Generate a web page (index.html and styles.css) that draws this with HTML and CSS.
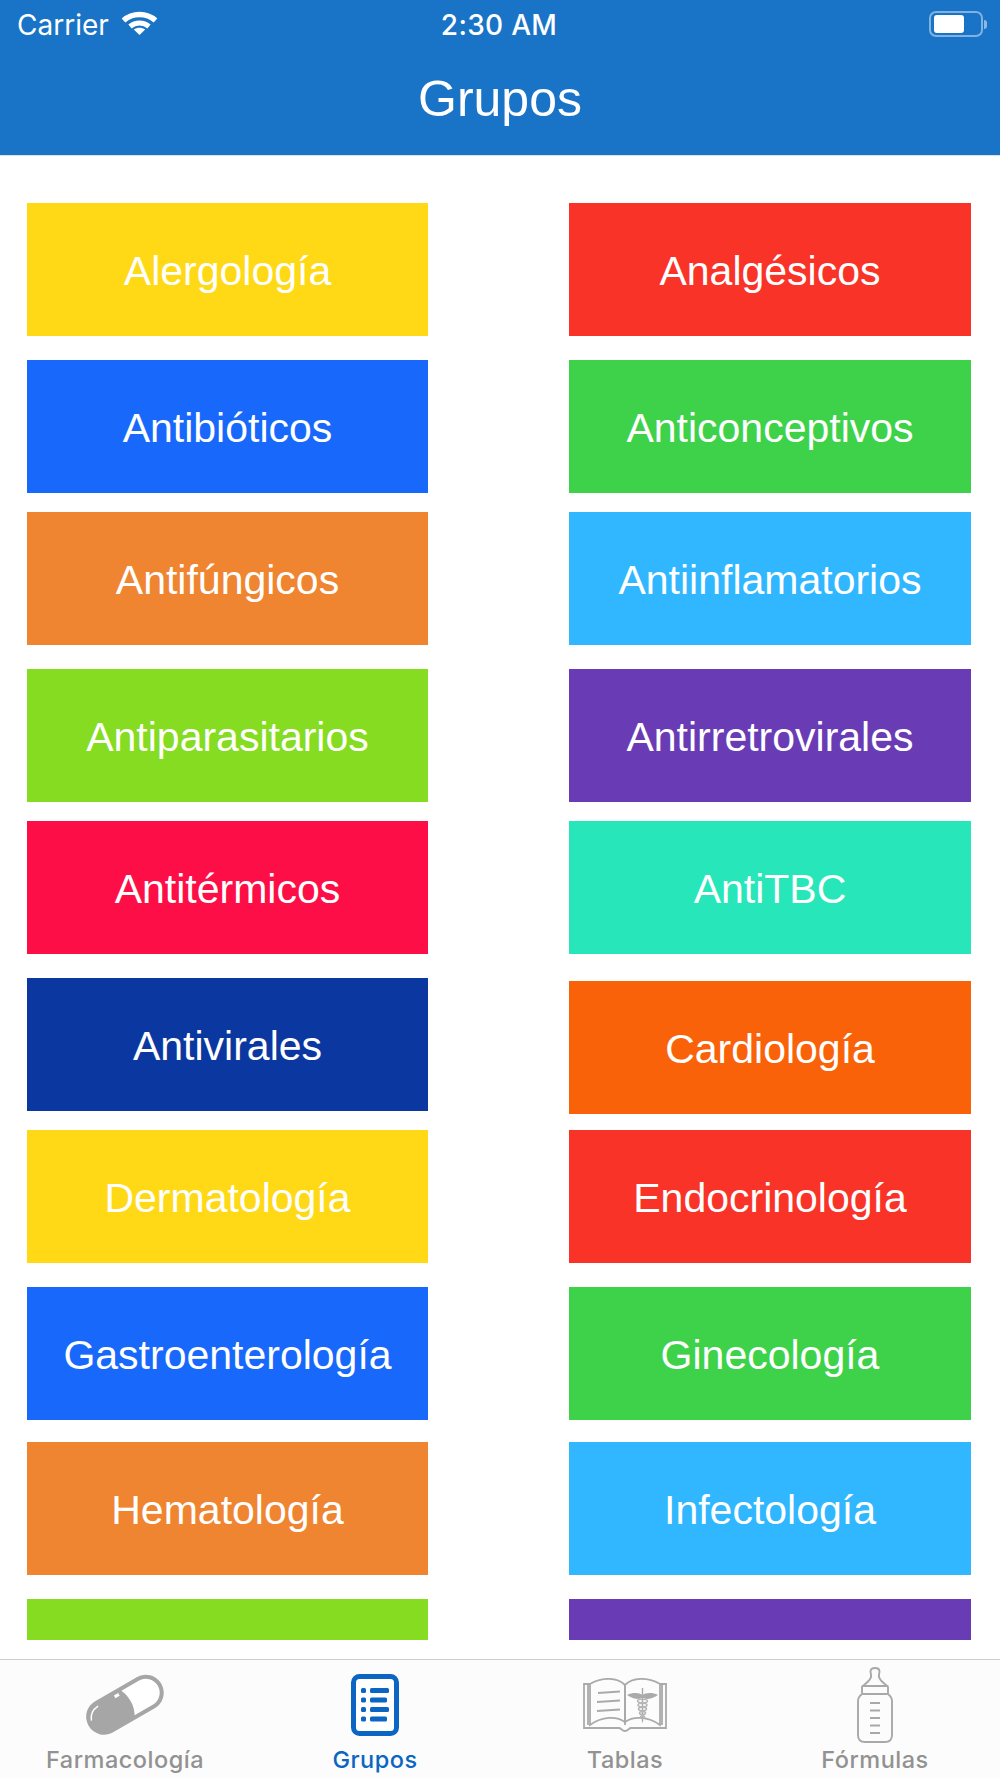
FILE: index.html
```html
<!DOCTYPE html>
<html lang="es">
<head>
    <meta charset="UTF-8">
    <title>Grupos</title>
    <link rel="stylesheet" href="styles.css">
</head>
<body>
    <header class="top-bar">
        <div class="status-bar">
            <div class="status-left">
                <span class="status-text">Carrier</span>
                <svg class="wifi" viewBox="0 0 37 24" width="37" height="24">
                    <path d="M2.500 9.500C11.500 1.500 25.500 1.500 34.500 9.500" fill="none" stroke="#fff" stroke-width="5.500"/>
                    <path d="M9 15.500C14.500 10.800 22.500 10.800 28 15.500" fill="none" stroke="#fff" stroke-width="5"/>
                    <path d="M18.500 24L12.800 18.500C16 16.300 21 16.300 24.200 18.500Z" fill="#fff"/>
                </svg>
            </div>
            <div class="status-time status-text">2:30 AM</div>
            <div class="status-right">
                <div class="battery"><div class="battery-fill"></div></div>
                <div class="battery-tip"></div>
            </div>
        </div>
        <h1 class="title">Grupos</h1>
    </header>

    <main class="groups">
        <div class="column">
            <div class="tile yellow">Alergología</div>
            <div class="tile blue gap-l">Antibióticos</div>
            <div class="tile orange gap-s">Antifúngicos</div>
            <div class="tile lime gap-l">Antiparasitarios</div>
            <div class="tile pink gap-s">Antitérmicos</div>
            <div class="tile navy gap-l">Antivirales</div>
            <div class="tile yellow gap-s">Dermatología</div>
            <div class="tile blue gap-l">Gastroenterología</div>
            <div class="tile orange gap-m">Hematología</div>
            <div class="tile lime gap-l"></div>
        </div>
        <div class="column">
            <div class="tile red">Analgésicos</div>
            <div class="tile green gap-l">Anticonceptivos</div>
            <div class="tile sky gap-s">Antiinflamatorios</div>
            <div class="tile purple gap-l">Antirretrovirales</div>
            <div class="tile teal gap-s">AntiTBC</div>
            <div class="tile deep-orange gap-xl">Cardiología</div>
            <div class="tile red gap-xs">Endocrinología</div>
            <div class="tile green gap-l">Ginecología</div>
            <div class="tile sky gap-m">Infectología</div>
            <div class="tile purple gap-l"></div>
        </div>
    </main>

    <nav class="tab-bar">
        <div class="tab">
            <div class="tab-icon">
                <svg viewBox="0 0 80 62" width="80" height="62">
                    <g transform="rotate(-30 39.500 31)">
                        <rect x="-2" y="13" width="84" height="36" rx="18" fill="#a6a6a6"/>
                        <path d="M44 17H64A14 14 0 0 1 64 45H43C48 37 48 26 44 17Z" fill="#fff"/>
                        <path d="M3 28C5 22.500 10 19.200 16 18.800" fill="none" stroke="#fff" stroke-width="1.500"/>
                        <rect x="35" y="17.500" width="5" height="3" fill="#fff"/>
                    </g>
                </svg>
            </div>
            <div class="tab-label">Farmacología</div>
        </div>
        <div class="tab active">
            <div class="tab-icon">
                <svg viewBox="0 0 48 62" width="48" height="62">
                    <rect x="2.500" y="2.500" width="43" height="57" rx="6" fill="#fff" stroke="#0a66c2" stroke-width="5"/>
                    <g fill="#0a66c2">
                        <rect x="10" y="14" width="5" height="5" rx="1.500"/>
                        <rect x="19" y="14" width="19" height="5" rx="1.500"/>
                        <rect x="10" y="23.500" width="5" height="5" rx="1.500"/>
                        <rect x="19" y="23.500" width="17" height="5" rx="1.500"/>
                        <rect x="10" y="33" width="5" height="5" rx="1.500"/>
                        <rect x="19" y="33" width="19" height="5" rx="1.500"/>
                        <rect x="10" y="42.500" width="5" height="5" rx="1.500"/>
                        <rect x="19" y="42.500" width="17" height="5" rx="1.500"/>
                    </g>
                </svg>
            </div>
            <div class="tab-label">Grupos</div>
        </div>
        <div class="tab">
            <div class="tab-icon">
                <svg viewBox="0 0 84 54" width="84" height="54">
                    <g fill="none" stroke="#aaa" stroke-width="1.800">
                        <path d="M7 6H1V50H36C38 50 39 53 42 53S46 50 48 50H83V6H77"/>
                        <path d="M5 6V47"/>
                        <path d="M79 6V47"/>
                        <path d="M42 44C34 38 19 38 7 47V6C19 -1 34 -1 42 7Z"/>
                        <path d="M42 44C50 38 65 38 77 47V6C65 -1 50 -1 42 7Z"/>
                        <path d="M42 7V47"/>
                        <path d="M15 15L37 13.500M14 24L37 22.500M14 33L37 31.500"/>
                    </g>
                    <g fill="#aaa">
                        <path d="M44 17C50 14 57 15 59.500 17C62 15 69 14 75 17C69 21 63 22 60.500 20H58.500C56 22 50 21 44 17Z"/>
                        <path d="M58.800 10H60.200V43L59.500 45L58.800 43Z"/>
                    </g>
                    <g fill="none" stroke="#b5b5b5" stroke-width="1.500">
                        <ellipse cx="59.500" cy="23" rx="5" ry="1.800"/>
                        <ellipse cx="59.500" cy="27" rx="4.500" ry="1.800"/>
                        <ellipse cx="59.500" cy="31" rx="4" ry="1.700"/>
                        <ellipse cx="59.500" cy="35" rx="3" ry="1.500"/>
                        <ellipse cx="59.500" cy="39" rx="2" ry="1.300"/>
                    </g>
                </svg>
            </div>
            <div class="tab-label">Tablas</div>
        </div>
        <div class="tab">
            <div class="tab-icon">
                <svg viewBox="0 0 36 76" width="36" height="76">
                    <g fill="none" stroke="#a8a8a8" stroke-width="1.900">
                        <path d="M6 19C9 16 13 14 14 10C14.500 8 13.500 6 13.500 4.500C13.500 2 15.500 1 18 1S22.500 2 22.500 4.500C22.500 6 21.500 8 22 10C23 14 27 16 30 19"/>
                        <rect x="5" y="19" width="26" height="8" rx="1"/>
                        <path d="M5 27C2.500 29 1 31 1 34V68C1 72.500 3.500 75 8 75H28C32.500 75 35 72.500 35 68V34C35 31 33.500 29 31 27"/>
                        <path d="M13 36H23M13 43.500H23M13 51H23M13 58.500H23M13 66H23"/>
                    </g>
                </svg>
            </div>
            <div class="tab-label">Fórmulas</div>
        </div>
    </nav>
</body>
</html>
```

FILE: styles.css
```css
body {
    margin: 0;
    height: 1778px;
    overflow: hidden;
    display: flex;
    flex-direction: column;
    background-color: #ffffff;
    font-family: "Liberation Sans", Arial, sans-serif;
}

/* Top bar */
.top-bar {
    height: 155px;
    flex: none;
    background-color: #1973c6;
    border-bottom: 1px solid #dbe3ea;
    color: #ffffff;
}
.status-bar {
    height: 48px;
    display: grid;
    grid-template-columns: 1fr auto 1fr;
    align-items: center;
    padding: 0 13px 0 17px;
    font-family: Inter, "Liberation Sans", sans-serif;
    font-size: 28px;
}
.status-text {
    padding-top: 2px;
}
.status-left {
    display: flex;
    align-items: center;
    gap: 12px;
}
.wifi {
    margin-bottom: 2px;
}
.status-time {
    margin-right: 6px;
    font-weight: 500;
    letter-spacing: 0.3px;
}
.status-right {
    display: flex;
    align-items: center;
    justify-content: flex-end;
    gap: 1px;
}
.battery {
    box-sizing: border-box;
    width: 54px;
    height: 26px;
    padding: 2px 3px;
    border: 2px solid rgba(255, 255, 255, 0.45);
    border-radius: 7px;
}
.battery-fill {
    width: 30px;
    height: 18px;
    background-color: #ffffff;
    border-radius: 3px;
}
.battery-tip {
    width: 3px;
    height: 9px;
    background-color: rgba(255, 255, 255, 0.5);
    border-radius: 0 4px 4px 0;
}
.title {
    margin: 0;
    padding-top: 22px;
    text-align: center;
    font-size: 50px;
    font-weight: normal;
    line-height: 58px;
}

/* Tiles */
.groups {
    flex: 1;
    min-height: 0;
    overflow: hidden;
    margin-bottom: 19px;
    padding: 47px 29px 0 27px;
    display: flex;
    justify-content: space-between;
    align-items: flex-start;
}
.column {
    width: 402px;
    flex: none;
}
.column:first-child {
    width: 401px;
}
.tile {
    box-sizing: border-box;
    height: 133px;
    padding-top: 4px;
    display: flex;
    align-items: center;
    justify-content: center;
    color: #ffffff;
    font-size: 41px;
}
.gap-xs { margin-top: 16px; }
.gap-s { margin-top: 19px; }
.gap-m { margin-top: 22px; }
.gap-l { margin-top: 24px; }
.gap-xl { margin-top: 27px; }

.yellow { background-color: #ffd915; }
.red { background-color: #fa3329; }
.blue { background-color: #1768fb; }
.green { background-color: #3ed24b; }
.orange { background-color: #f08531; }
.sky { background-color: #30b7ff; }
.lime { background-color: #85dc20; }
.purple { background-color: #693cb6; }
.pink { background-color: #fd0e46; }
.teal { background-color: #27e6ba; }
.navy { background-color: #0b38a0; }
.deep-orange { background-color: #fa6209; }

/* Tab bar */
.tab-bar {
    height: 119px;
    flex: none;
    box-sizing: border-box;
    border-top: 1px solid #cfcfcf;
    background-color: #fcfcfc;
    display: grid;
    grid-template-columns: repeat(4, 1fr);
}
.tab {
    text-align: center;
    color: #929292;
}
.tab.active {
    color: #0a66c2;
}
.tab-icon {
    height: 90px;
    display: flex;
    align-items: center;
    justify-content: center;
}
.tab-label {
    margin-top: -3px;
    font-family: Inter, "Liberation Sans", sans-serif;
    font-size: 23.500px;
    font-weight: 500;
    line-height: 26px;
    letter-spacing: 0.5px;
}
```
